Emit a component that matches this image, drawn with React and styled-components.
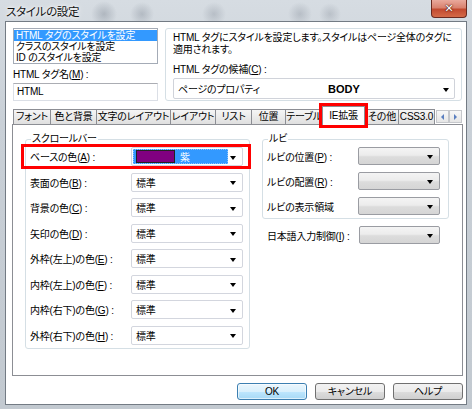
import React from 'react';
import styled, { createGlobalStyle, css } from 'styled-components';

const Global = createGlobalStyle`
  html, body { margin: 0; padding: 0; }
  body {
    width: 472px; height: 409px; overflow: hidden;
    font-family: "Liberation Sans", "Noto Sans CJK JP", sans-serif;
    font-size: 10px; letter-spacing: -0.2px; color: #000;
    font-feature-settings: "palt" 1;
    font-variant-east-asian: proportional-width;
  }
  #root { width: 472px; height: 409px; }
`;

const Window = styled.div`
  width: 472px; height: 409px; box-sizing: border-box;
  display: flex; flex-direction: column;
  padding: 0 5px 4px 5px;
  background:
    radial-gradient(circle at 104px 14px, rgba(80,90,105,.28), transparent 13px),
    radial-gradient(circle at 142px 14px, rgba(80,90,105,.25), transparent 12px),
    radial-gradient(circle at 214px 14px, rgba(80,90,105,.22), transparent 12px),
    radial-gradient(circle at 300px 14px, rgba(80,90,105,.22), transparent 12px),
    radial-gradient(circle at 330px 14px, rgba(80,90,105,.2), transparent 11px),
    linear-gradient(180deg, #d6dce2 0%, #c9d0d7 30%, #c2c9d0 100%);
`;

const TitleBar = styled.div`
  height: 21px; flex: none; position: relative;
  display: flex; align-items: center;
  padding-left: 1px;
`;

const Title = styled.span`
  font-size: 11.5px; line-height: 14px; color: #111; letter-spacing: -0.3px;
  text-shadow: 0 0 6px rgba(255,255,255,.9), 0 0 3px rgba(255,255,255,.9);
  margin-top: 2px;
`;

const CloseButton = styled.div`
  position: absolute; top: 0; right: 0;
  width: 36px; height: 18px; box-sizing: border-box;
  border: 1px solid #6a2a20; border-top: none;
  border-radius: 0 0 4px 4px;
  background: linear-gradient(180deg, #e9a99c 0%, #d9826f 45%, #c24a30 55%, #d46a48 100%);
  display: flex; align-items: center; justify-content: center;
  color: #fff; font-family: "DejaVu Sans", sans-serif; font-weight: bold; font-size: 11px;
  text-shadow: 0 0 2px #3a0c05, 0 0 1px #3a0c05;
`;

const Client = styled.div`
  flex: 1; display: flex; flex-direction: column;
  border: 1px solid #737b84;
  background: #fff;
  padding: 6px 3px 0 6px;
`;

const TopSection = styled.div`
  display: grid; grid-template-columns: 146px 1fr; gap: 7px;
  height: 73px;
`;

const LeftCol = styled.div`
  display: flex; flex-direction: column; padding-left: 1px;
`;

const ListBox = styled.div`
  height: 36px; box-sizing: border-box;
  border: 1px solid #a4abb6;
  padding-top: 1px;
  display: flex; flex-direction: column;
`;

const ListItem = styled.div`
  height: 11px; line-height: 11px; padding-left: 2px; white-space: nowrap;
  ${p => p.$selected && css`background: #3399ff; color: #fff;`}
`;

const FieldLabel = styled.div`
  line-height: 14px; margin-top: 4px; white-space: nowrap;
`;

const TextBox = styled.div`
  margin-top: 1px; height: 18px; box-sizing: border-box;
  border: 1px solid #dbdfe6; border-top-color: #abadb3;
  padding-left: 3px; line-height: 16px;
`;

const InfoBox = styled.div`
  border: 1px solid #d5dfe5; border-radius: 3px;
  margin-right: 1px;
  padding: 3px 6px 0 7px;
  display: flex; flex-direction: column;
`;

const InfoText = styled.div`
  line-height: 12px; white-space: nowrap;
`;

const InfoLabel = styled.div`
  line-height: 12px; margin-top: 8px; white-space: nowrap;
`;

const BigSelect = styled.div`
  margin-top: 2px; height: 21px; box-sizing: border-box;
  border: 1px solid #d0d3da; border-radius: 2px;
  display: flex; align-items: center; position: relative;
  padding-left: 4px;
`;

const SelectText = styled.span`
  width: ${p => p.$w}px; flex: none; white-space: nowrap;
`;

const BodyText = styled.span`
  font-weight: bold; font-size: 11px; letter-spacing: 0;
`;

const Arrow = styled.span`
  width: 0; height: 0;
  border-left: 3.5px solid transparent; border-right: 3.5px solid transparent;
  border-top: 4px solid #000;
  position: absolute; right: ${p => p.$right ?? 6}px; top: 50%; margin-top: -1px;
`;

const TabStrip = styled.div`
  margin-top: 5px; height: 18px; display: flex; align-items: flex-end;
  position: relative; z-index: 1; padding-left: 1px;
`;

const Tab = styled.div`
  width: ${p => p.$w}px; box-sizing: border-box; flex: none;
  height: 15px; line-height: 14px; text-align: center; white-space: nowrap; overflow: hidden;
  border: 1px solid #8c8e94; border-bottom: none; border-right: none;
  background: linear-gradient(180deg, #f5f5f5 0%, #ebebeb 50%, #dfdfdf 100%);
  ${p => p.$last && css`border-right: 1px solid #8c8e94;`}
  ${p => p.$selected && css`
    height: 19px; background: #fff; line-height: 17px;
    border-right: 1px solid #8c8e94; margin-bottom: -1px;
    outline: 3px solid #f00; outline-offset: 0px;
    position: relative; z-index: 2;
  `}
`;

const ScrollArrows = styled.div`
  display: flex; margin-left: 1px; margin-bottom: 1px;
`;

const ScrollBtn = styled.div`
  width: 13px; height: 13px; box-sizing: border-box;
  border: 1px solid #c6c8cc; background: linear-gradient(#f8f8f8, #e6e6e6);
  display: flex; align-items: center; justify-content: center;
  &::after {
    content: ""; width: 0; height: 0;
    border-top: 3px solid transparent; border-bottom: 3px solid transparent;
    ${p => p.$dir === 'left'
      ? css`border-right: 3px solid #5a7fc0;`
      : css`border-left: 3px solid #5a7fc0;`}
  }
`;

const Panel = styled.div`
  height: 252px; box-sizing: border-box;
  border: 1px solid #8c8e94; background: #fff;
  display: flex; align-items: flex-start; gap: 12px;
  padding: 8px 0 0 12px;
`;

const Group = styled.fieldset`
  margin: 0; min-width: 0; box-sizing: border-box;
  width: ${p => p.$w}px;
  border: 1px solid #d5dfe5; border-radius: 3px;
  padding: 2px ${p => p.$pr}px 3px 4px;
  display: flex; flex-direction: column; gap: ${p => p.$gap}px;
`;

const Legend = styled.legend`
  padding: 0 1px; margin-left: 1px;
  line-height: 12px; font-size: 10px;
`;

const Row = styled.div`
  display: flex; align-items: center; height: ${p => p.$h}px;
  ${p => p.$pl && css`padding-left: ${p.$pl}px;`}
  ${p => p.$mt && css`margin-top: ${p.$mt}px;`}
  ${p => p.$highlight && css`
    outline: 3px solid #f00; outline-offset: 0px;
    margin-left: -6px; padding-left: 6px; margin-right: -5px; padding-right: 5px;
  `}
`;

const RowLabel = styled.span`
  width: ${p => p.$w}px; flex: none; white-space: nowrap;
`;

const Key = styled.span`
  text-decoration: underline; text-underline-offset: 1px;
`;

const Select = styled.div`
  width: ${p => p.$w}px; height: 100%; box-sizing: border-box; flex: none;
  position: relative; display: flex; align-items: center;
  border: 1px solid #d3d6de; border-radius: 2px; background: #fff;
  padding-left: 4px;
  ${p => p.$plain && css`
    border-color: #9a9ca2;
    background: linear-gradient(180deg, #f4f4f4 0%, #ececec 45%, #dcdcdc 55%, #d5d5d5 100%);
  `}
`;

const Focused = styled.div`
  position: absolute; left: 1px; top: 1px; bottom: 1px; right: 14px;
  background: #3399ff; border: 1px dotted #8cc4ff;
  display: flex; align-items: center; gap: 5px; padding-left: 2px;
  color: #fff;
`;

const Swatch = styled.span`
  width: 39px; height: 13px; box-sizing: border-box;
  background: ${p => p.$c}; border: 1px solid #222;
`;

const RightCol = styled.div`
  width: 187px; display: flex; flex-direction: column;
`;

const ButtonRow = styled.div`
  display: flex; justify-content: flex-end; gap: 8px;
  margin-top: 7px;
`;

const Button = styled.div`
  width: 70px; height: 17px; box-sizing: border-box;
  border: 1px solid #707070; border-radius: 3px;
  background: linear-gradient(180deg, #f2f2f2 0%, #ebebeb 50%, #dddddd 51%, #cfcfcf 100%);
  text-align: center; line-height: 15px;
  ${p => p.$default && css`
    border-color: #3c7fb1;
    background: linear-gradient(180deg, #eaf6fd 0%, #d9f0fc 50%, #bee6fd 51%, #a7d9f5 100%);
    box-shadow: inset 0 0 0 1px rgba(255,255,255,.6);
  `}
`;

const Label = ({ text, k, colon = true }) => (
  <>
    {text}{k && <>(<Key>{k}</Key>)</>}{colon && ' :'}
  </>
);

const tabs = [
  ['フォント', 37], ['色と背景', 46], ['文字のレイアウト', 74], ['レイアウト', 45],
  ['リスト', 36], ['位置', 34], ['テーブル', 37], ['IE拡張', 43, true], ['その他', 33], ['CSS3.0', 37],
];

const scrollRows = [
  ['ベースの色', 'A'], ['表面の色', 'B'], ['背景の色', 'C'], ['矢印の色', 'D'],
  ['外枠(左上)の色', 'E'], ['内枠(左上)の色', 'F'], ['内枠(右下)の色', 'G'], ['外枠(右下)の色', 'H'],
];

const rubyRows = [
  ['ルビの位置', 'P', true], ['ルビの配置', 'R', true], ['ルビの表示領域', null, false],
];

export default function App() {
  return (
    <>
      <Global />
      <Window>
        <TitleBar>
          <Title>スタイルの設定</Title>
          <CloseButton>✕</CloseButton>
        </TitleBar>
        <Client>
          <TopSection>
            <LeftCol>
              <ListBox>
                <ListItem $selected>HTML タグのスタイルを設定</ListItem>
                <ListItem>クラスのスタイルを設定</ListItem>
                <ListItem>ID のスタイルを設定</ListItem>
              </ListBox>
              <FieldLabel><Label text="HTML タグ名" k="M" /></FieldLabel>
              <TextBox>HTML</TextBox>
            </LeftCol>
            <InfoBox>
              <InfoText>HTML タグにスタイルを設定します。スタイルはページ全体のタグに</InfoText>
              <InfoText>適用されます。</InfoText>
              <InfoLabel><Label text="HTML タグの候補" k="C" /></InfoLabel>
              <BigSelect>
                <SelectText $w={150}>ページのプロパティ</SelectText>
                <BodyText>BODY</BodyText>
                <Arrow $right={5} />
              </BigSelect>
            </InfoBox>
          </TopSection>

          <TabStrip>
            {tabs.map(([t, w, sel], i) => (
              <Tab key={t} $w={w} $selected={sel} $last={i === tabs.length - 1}>{t}</Tab>
            ))}
            <ScrollArrows>
              <ScrollBtn $dir="left" />
              <ScrollBtn $dir="right" />
            </ScrollArrows>
          </TabStrip>
          <Panel>
            <Group $w={225} $pr={6} $gap={6.5}>
              <Legend>スクロールバー</Legend>
              {scrollRows.map(([t, k], i) => (
                <Row key={k} $h={19} $highlight={i === 0}>
                  <RowLabel $w={101}><Label text={t} k={k} /></RowLabel>
                  <Select $w={112}>
                    {i === 0 ? (
                      <Focused><Swatch $c="#800080" />紫</Focused>
                    ) : '標準'}
                    <Arrow />
                  </Select>
                </Row>
              ))}
            </Group>
            <RightCol>
              <Group $w={187} $pr={8} $gap={7}>
                <Legend>ルビ</Legend>
                {rubyRows.map(([t, k, c]) => (
                  <Row key={t} $h={18}>
                    <RowLabel $w={91}><Label text={t} k={k} colon={c} /></RowLabel>
                    <Select $w={82} $plain><Arrow /></Select>
                  </Row>
                ))}
              </Group>
              <Row $h={18} $pl={5} $mt={7}>
                <RowLabel $w={92}><Label text="日本語入力制御" k="I" /></RowLabel>
                <Select $w={81} $plain><Arrow /></Select>
              </Row>
            </RightCol>
          </Panel>
          <ButtonRow>
            <Button $default>OK</Button>
            <Button>キャンセル</Button>
            <Button>ヘルプ</Button>
          </ButtonRow>
        </Client>
      </Window>
    </>
  );
}
